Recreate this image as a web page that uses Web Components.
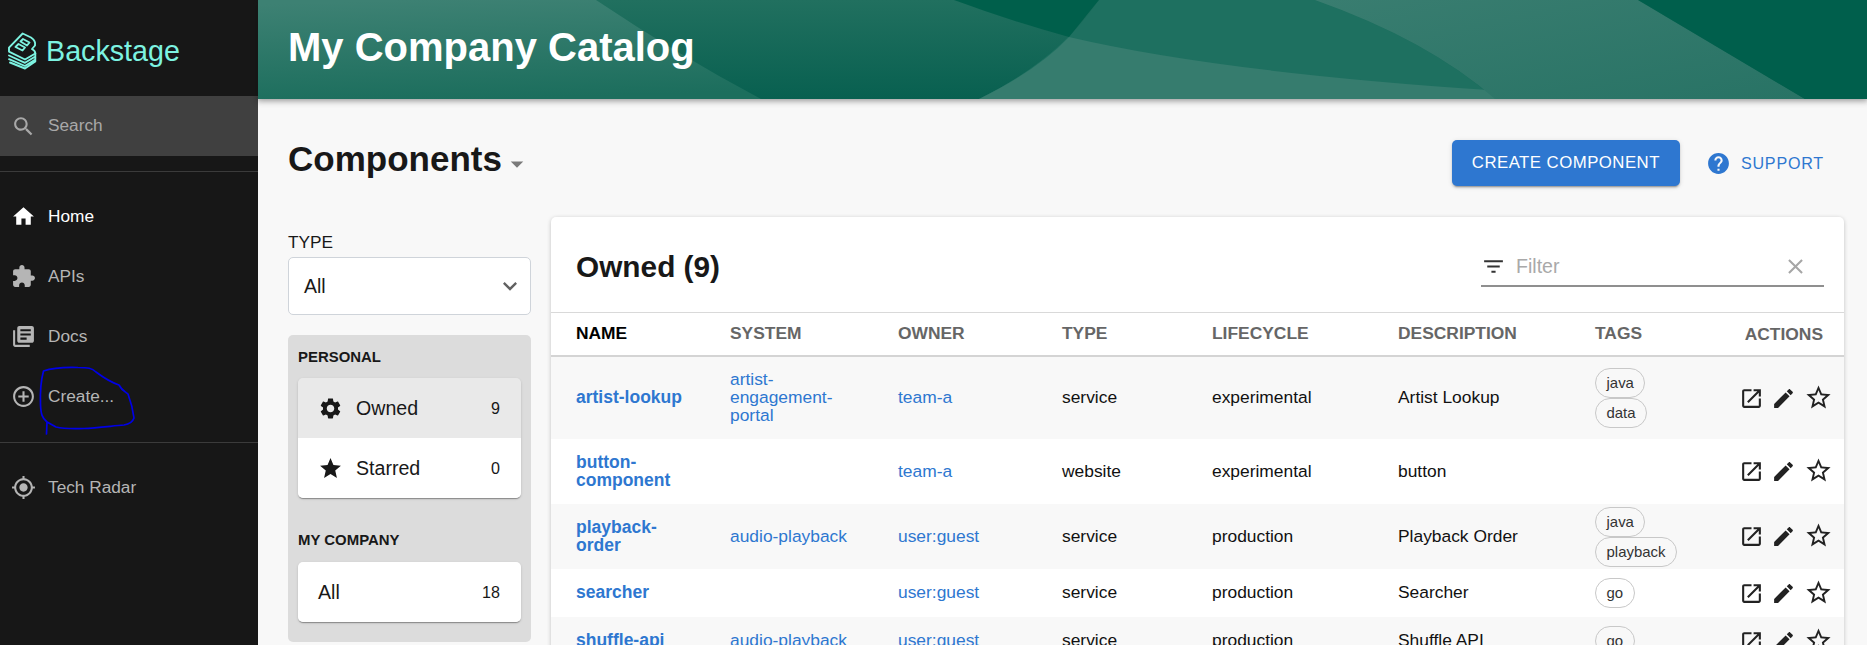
<!DOCTYPE html>
<html lang="en">
<head>
<meta charset="utf-8">
<title>My Company Catalog</title>
<style>
    html, body { margin: 0; height: 645px; overflow: hidden; background: #f8f8f8; }
    body { font-family: "Liberation Sans", Arial, sans-serif; color: #181818; }
</style>
</head>
<body>
<backstage-app>
    <side-bar slot="side">
        <nav-item icon="home" active>Home</nav-item>
        <nav-item icon="extension">APIs</nav-item>
        <nav-item icon="docs">Docs</nav-item>
        <nav-item icon="add">Create...</nav-item>
        <nav-item icon="radar" slot="tools">Tech Radar</nav-item>
    </side-bar>
    <page-banner slot="banner">My Company Catalog</page-banner>
    <content-head slot="head">Components</content-head>

    <filter-column slot="filters">
        <filter-group title="PERSONAL">
            <filter-row icon="settings" count="9" selected>Owned</filter-row>
            <filter-row icon="star" count="0">Starred</filter-row>
        </filter-group>
        <filter-group title="MY COMPANY">
            <filter-row count="18">All</filter-row>
        </filter-group>
    </filter-column>

    <catalog-card slot="table" heading="Owned (9)">
        <catalog-row head>
            <catalog-cell kind="head-first">NAME</catalog-cell>
            <catalog-cell kind="head">SYSTEM</catalog-cell>
            <catalog-cell kind="head">OWNER</catalog-cell>
            <catalog-cell kind="head">TYPE</catalog-cell>
            <catalog-cell kind="head">LIFECYCLE</catalog-cell>
            <catalog-cell kind="head">DESCRIPTION</catalog-cell>
            <catalog-cell kind="head">TAGS</catalog-cell>
            <catalog-cell kind="head-end">ACTIONS</catalog-cell>
        </catalog-row>
        <catalog-row>
            <catalog-cell kind="name">artist-lookup</catalog-cell>
            <catalog-cell kind="system">artist-engagement-portal</catalog-cell>
            <catalog-cell kind="link">team-a</catalog-cell>
            <catalog-cell>service</catalog-cell>
            <catalog-cell>experimental</catalog-cell>
            <catalog-cell>Artist Lookup</catalog-cell>
            <catalog-cell kind="tags"><tag-chip>java</tag-chip><tag-chip>data</tag-chip></catalog-cell>
            <row-actions></row-actions>
        </catalog-row>
        <catalog-row>
            <catalog-cell kind="name">button-component</catalog-cell>
            <catalog-cell kind="system"></catalog-cell>
            <catalog-cell kind="link">team-a</catalog-cell>
            <catalog-cell>website</catalog-cell>
            <catalog-cell>experimental</catalog-cell>
            <catalog-cell>button</catalog-cell>
            <catalog-cell kind="tags"></catalog-cell>
            <row-actions></row-actions>
        </catalog-row>
        <catalog-row>
            <catalog-cell kind="name">playback-order</catalog-cell>
            <catalog-cell kind="system">audio-playback</catalog-cell>
            <catalog-cell kind="link">user:guest</catalog-cell>
            <catalog-cell>service</catalog-cell>
            <catalog-cell>production</catalog-cell>
            <catalog-cell>Playback Order</catalog-cell>
            <catalog-cell kind="tags"><tag-chip>java</tag-chip><tag-chip>playback</tag-chip></catalog-cell>
            <row-actions></row-actions>
        </catalog-row>
        <catalog-row>
            <catalog-cell kind="name">searcher</catalog-cell>
            <catalog-cell kind="system"></catalog-cell>
            <catalog-cell kind="link">user:guest</catalog-cell>
            <catalog-cell>service</catalog-cell>
            <catalog-cell>production</catalog-cell>
            <catalog-cell>Searcher</catalog-cell>
            <catalog-cell kind="tags"><tag-chip>go</tag-chip></catalog-cell>
            <row-actions></row-actions>
        </catalog-row>
        <catalog-row>
            <catalog-cell kind="name">shuffle-api</catalog-cell>
            <catalog-cell kind="system">audio-playback</catalog-cell>
            <catalog-cell kind="link">user:guest</catalog-cell>
            <catalog-cell>service</catalog-cell>
            <catalog-cell>production</catalog-cell>
            <catalog-cell>Shuffle API</catalog-cell>
            <catalog-cell kind="tags"><tag-chip>go</tag-chip></catalog-cell>
            <row-actions></row-actions>
        </catalog-row>
    </catalog-card>
</backstage-app>

<script>
// Material icon paths
const ICONS = {
    search: 'M15.5 14h-.79l-.28-.27C15.41 12.59 16 11.11 16 9.5 16 5.91 13.09 3 9.5 3S3 5.91 3 9.5 5.91 16 9.5 16c1.61 0 3.09-.59 4.23-1.57l.27.28v.79l5 4.99L20.49 19l-4.99-5zm-6 0C7.01 14 5 11.99 5 9.5S7.01 5 9.5 5 14 7.01 14 9.5 11.99 14 9.5 14z',
    home: 'M10 20v-6h4v6h5v-8h3L12 3 2 12h3v8z',
    extension: 'M20.5 11H19V7c0-1.1-.9-2-2-2h-4V3.5C13 2.12 11.88 1 10.5 1S8 2.12 8 3.5V5H4c-1.1 0-1.99.9-1.99 2v3.8H3.5c1.49 0 2.7 1.21 2.7 2.7s-1.21 2.7-2.7 2.7H2V20c0 1.1.9 2 2 2h3.8v-1.5c0-1.49 1.21-2.7 2.7-2.7 1.49 0 2.7 1.21 2.7 2.7V22H17c1.1 0 2-.9 2-2v-4h1.5c1.38 0 2.5-1.12 2.5-2.5S21.88 11 20.5 11z',
    docs: 'M4 6H2v14c0 1.1.9 2 2 2h14v-2H4V6zm16-4H8c-1.1 0-2 .9-2 2v12c0 1.1.9 2 2 2h12c1.1 0 2-.9 2-2V4c0-1.1-.9-2-2-2zm-1 9H9V9h10v2zm-4 4H9v-2h6v2zm4-8H9V5h10v2z',
    add: 'M13 7h-2v4H7v2h4v4h2v-4h4v-2h-4V7zm-1-5C6.48 2 2 6.48 2 12s4.48 10 10 10 10-4.48 10-10S17.52 2 12 2zm0 18c-4.41 0-8-3.59-8-8s3.59-8 8-8 8 3.59 8 8-3.59 8-8 8z',
    radar: 'M12 8c-2.21 0-4 1.79-4 4s1.79 4 4 4 4-1.79 4-4-1.79-4-4-4zm8.94 3c-.46-4.17-3.77-7.48-7.94-7.94V1h-2v2.06C6.83 3.52 3.52 6.83 3.06 11H1v2h2.06c.46 4.17 3.77 7.48 7.94 7.94V23h2v-2.06c4.17-.46 7.48-3.77 7.94-7.94H23v-2h-2.06zM12 19c-3.87 0-7-3.13-7-7s3.13-7 7-7 7 3.13 7 7-3.13 7-7 7z',
    settings: 'M19.14 12.94c.04-.3.06-.61.06-.94 0-.32-.02-.64-.07-.94l2.03-1.58c.18-.14.23-.41.12-.61l-1.92-3.32c-.12-.22-.37-.29-.59-.22l-2.39.96c-.5-.38-1.03-.7-1.62-.94l-.36-2.54c-.04-.24-.24-.41-.48-.41h-3.84c-.24 0-.43.17-.47.41l-.36 2.54c-.59.24-1.13.57-1.62.94l-2.39-.96c-.22-.08-.47 0-.59.22L2.74 8.87c-.12.21-.08.47.12.61l2.03 1.58c-.05.3-.09.63-.09.94s.02.64.07.94l-2.03 1.58c-.18.14-.23.41-.12.61l1.92 3.32c.12.22.37.29.59.22l2.39-.96c.5.38 1.03.7 1.62.94l.36 2.54c.05.24.24.41.48.41h3.84c.24 0 .44-.17.47-.41l.36-2.54c.59-.24 1.13-.56 1.62-.94l2.39.96c.22.08.47 0 .59-.22l1.92-3.32c.12-.22.07-.47-.12-.61l-2.01-1.58zM12 15.6c-1.98 0-3.6-1.62-3.6-3.6s1.62-3.6 3.6-3.6 3.6 1.62 3.6 3.6-1.62 3.6-3.6 3.6z',
    star: 'M12 17.27L18.18 21l-1.64-7.03L22 9.24l-7.19-.61L12 2 9.19 8.63 2 9.24l5.46 4.73L5.82 21z',
    starBorder: 'M22 9.24l-7.19-.62L12 2 9.19 8.63 2 9.24l5.46 4.73L5.82 21 12 17.27 18.18 21l-1.63-7.03L22 9.24zM12 15.4l-3.76 2.27 1-4.28-3.32-2.88 4.38-.38L12 6.1l1.71 4.04 4.38.38-3.32 2.88 1 4.28L12 15.4z',
    openNew: 'M19 19H5V5h7V3H5c-1.11 0-2 .9-2 2v14c0 1.1.89 2 2 2h14c1.1 0 2-.9 2-2v-7h-2v7zM14 3v2h3.59l-9.83 9.83 1.41 1.41L19 6.41V10h2V3h-7z',
    edit: 'M3 17.25V21h3.75L17.81 9.94l-3.75-3.75L3 17.25zM20.71 7.04c.39-.39.39-1.02 0-1.41l-2.34-2.34c-.39-.39-1.02-.39-1.41 0l-1.83 1.83 3.75 3.75 1.83-1.83z',
    filter: 'M10 18h4v-2h-4v2zM3 6v2h18V6H3zm3 7h12v-2H6v2z',
    clear: 'M19 6.41L17.59 5 12 10.59 6.41 5 5 6.41 10.59 12 5 17.59 6.41 19 12 13.41 17.59 19 19 17.59 13.41 12z',
    help: 'M12 2C6.48 2 2 6.48 2 12s4.48 10 10 10 10-4.48 10-10S17.52 2 12 2zm1 17h-2v-2h2v2zm2.07-7.75l-.9.92C13.45 12.9 13 13.5 13 15h-2v-.5c0-1.1.45-2.1 1.17-2.83l1.24-1.26c.37-.36.59-.86.59-1.41 0-1.1-.9-2-2-2s-2 .9-2 2H8c0-2.21 1.79-4 4-4s4 1.79 4 4c0 .88-.36 1.68-.93 2.25z',
    expand: 'M16.59 8.59L12 13.17 7.41 8.59 6 10l6 6 6-6z',
    dropdown: 'M7 10l5 5 5-5z',
};

/**
 * 共通の土台: shadow root にテンプレートを流し込む
 */
class BaseElement extends HTMLElement {
    constructor() {
        super();
        this.attachShadow({ mode: 'open' });
    }
    connectedCallback() {
        this.shadowRoot.innerHTML = this.template();
    }
}

class MdIcon extends BaseElement {
    template() {
        const size = this.getAttribute('size') || 24;
        const path = ICONS[this.getAttribute('name')] || '';
        return `
            <style>
                :host { display: block; width: ${size}px; height: ${size}px; flex: none; }
                svg { display: block; width: 100%; height: 100%; fill: currentColor; }
            </style>
            <svg viewBox="0 0 24 24"><path d="${path}"/></svg>
        `;
    }
}
customElements.define('md-icon', MdIcon);

/**
 * アプリ全体の枠
 */
class BackstageApp extends BaseElement {
    template() {
        return `
            <style>
                :host { display: flex; height: 645px; overflow: hidden; }
                #main { flex: 1; min-width: 0; display: flex; flex-direction: column; }
                #body { flex: 1; min-height: 0; display: flex; flex-direction: column; padding: 0 23px 0 30px; }
                #columns { display: grid; grid-template-columns: 243px 1293px; column-gap: 20px; align-items: start; }
            </style>
            <slot name="side"></slot>
            <div id="main">
                <slot name="banner"></slot>
                <div id="body">
                    <slot name="head"></slot>
                    <div id="columns">
                        <slot name="filters"></slot>
                        <slot name="table"></slot>
                    </div>
                </div>
            </div>
        `;
    }
}
customElements.define('backstage-app', BackstageApp);

/**
 * サイドバー
 */
class SideBar extends BaseElement {
    template() {
        return `
            <style>
                :host { display: block; position: relative; width: 258px; height: 645px; flex: none; background: #171717; }
                #logo { height: 96px; display: flex; align-items: center; padding: 0 0 0 7px; box-sizing: border-box; color: #7df3e1; font-size: 28.7px; }
                #logo svg { width: 31px; height: 39px; margin-right: 8px; margin-top: 5px; flex: none; }
                #logo span { margin-top: 7px; }
                #search { height: 60px; background: #404040; display: flex; align-items: center; padding-left: 11px; color: #a8a8a8; font-size: 17.25px; }
                #search span { margin: -2px 0 0 12px; }
                hr { border: 0; height: 1px; background: #3b3b3b; margin: 0; }
                #first { margin-top: 15px; }
                #items { padding-top: 14px; display: flex; flex-direction: column; }
                #second { margin-top: 16px; }
                #tools { padding-top: 14px; display: flex; flex-direction: column; }
                /* 手書きの丸印 */
                #scribble { position: absolute; left: 0; top: 0; width: 258px; height: 645px; pointer-events: none; }
            </style>
            <div id="logo">
                <svg viewBox="7 6 31 39" fill="none" stroke="#7df3e1" stroke-width="1.9" stroke-linejoin="round" stroke-linecap="round">
                    <path d="M9 22.700 L22.700 8.500 L31 12.500 Q36 16 35 20.500 L32 24 Q35.500 26 35.300 28.500 L25 34.500 L9 26.600 Z"/>
                    <path d="M20.500 16.500 L23 14 L29.500 17.500 L27 20.500Z M15.500 22 L18.500 19 L25 22.500 L22.500 25.500Z"/>
                    <path d="M9 30.500 L25 37.800 L35.300 31.500 M9 34.200 L25 41 L35.300 34.500 M10 37.500 L25 43.500 L35.300 36.500 M35.300 28.500 V36.500"/>
                </svg>
                <span>Backstage</span>
            </div>
            <div id="search"><md-icon name="search" size="25"></md-icon><span>Search</span></div>
            <hr id="first">
            <div id="items"><slot></slot></div>
            <hr id="second">
            <div id="tools"><slot name="tools"></slot></div>
            <svg id="scribble" viewBox="0 0 258 645" fill="none" stroke="#0000e6" stroke-width="1.7" stroke-linecap="round" stroke-linejoin="round">
                <path d="M46.500 434 L47 422 C42 418 41 414 40.500 405 C40 392 41 380 43.500 371 C52 368 62 367 78 367.500 C88 367.500 92 368 96 372 C104 378 110 382 119 385 C122 391 126 392 128 394 C131 402 133 410 134 418 C133 421 130 424 124 425 C112 426 96 428 84 428.500 C72 429 60 428 56 427 L47 422"/>
            </svg>
        `;
    }
}
customElements.define('side-bar', SideBar);

class NavItem extends BaseElement {
    template() {
        const colour = this.hasAttribute('active') ? '#ffffff' : '#b5b5b5';
        return `
            <style>
                :host { display: flex; align-items: center; height: 60px; padding-left: 11px; color: ${colour}; font-size: 17.25px; }
                span { margin-left: 12px; }
            </style>
            <md-icon name="${this.getAttribute('icon')}" size="25"></md-icon>
            <span><slot></slot></span>
        `;
    }
}
customElements.define('nav-item', NavItem);

/**
 * ページ上部のバナー (波模様は下に敷く)
 */
class PageBanner extends BaseElement {
    template() {
        return `
            <style>
                :host { display: grid; height: 99px; flex: none; box-shadow: 0 1px 6px 1px rgba(20,20,20,.42); z-index: 1; background: #0d6453; }
                svg, h1 { grid-area: 1 / 1; }
                svg { width: 100%; height: 99px; display: block; }
                h1 { margin: 0; align-self: center; padding: 0 0 5px 30px; color: #fff; font-size: 40px; font-weight: 700; line-height: 48px; }
            </style>
            <svg viewBox="0 0 1609 99" preserveAspectRatio="none">
                <defs>
                    <linearGradient id="base" x1="0" y1="0" x2="0" y2="1"><stop offset="0" stop-color="#21705f"/><stop offset="1" stop-color="#086050"/></linearGradient>
                    <linearGradient id="left" x1="0.3" y1="0" x2="0.45" y2="1"><stop offset="0" stop-color="#3d8173"/><stop offset="1" stop-color="#1c6e5d"/></linearGradient>
                    <linearGradient id="band" x1="0" y1="0" x2="1" y2="1"><stop offset="0" stop-color="#397d70"/><stop offset="1" stop-color="#287365"/></linearGradient>
                </defs>
                <rect width="1609" height="99" fill="url(#base)"/>
                <path d="M841 0 H1057 Q1170 40 1237 99 H721 Q800 60 841 0Z" fill="#1e7060"/>
                <path d="M0 0 H338 Q420 55 503 99 H0Z" fill="url(#left)"/>
                <path d="M696 0 Q750 20 811 37 L841 0Z" fill="#005f4b"/>
                <path d="M811 37 Q780 70 721 99 H1300 L1231 90 Q960 72 811 37Z" fill="#367c6e"/>
                <path d="M1057 0 Q1170 40 1237 99 H1547 L1380 0Z" fill="url(#band)"/>
                <path d="M1380 0 H1609 V99 H1547Z" fill="#005f4c"/>
            </svg>
            <h1><slot></slot></h1>
        `;
    }
}
customElements.define('page-banner', PageBanner);

/**
 * 「Components」見出しとボタン
 */
class ContentHead extends BaseElement {
    template() {
        return `
            <style>
                :host { display: flex; align-items: center; height: 118px; box-sizing: border-box; flex: none; padding: 10px 20px 0 0; }
                h2 { margin: 0; font-size: 35px; font-weight: 700; line-height: 40px; color: #181818; padding-bottom: 9px; }
                #arrow { color: #7a7a7a; margin: 1px 0 0 0; }
                #spacer { flex: 1; }
                #create { height: 46px; width: 228px; display: flex; align-items: center; justify-content: center; background: #2e77d0; color: #fff; border-radius: 5px; font-size: 16.8px; letter-spacing: .47px; box-shadow: 0 3px 1px -2px rgba(0,0,0,.2), 0 2px 2px 0 rgba(0,0,0,.14), 0 1px 5px 0 rgba(0,0,0,.12); }
                #support { display: flex; align-items: center; margin-left: 26px; color: #2e77d0; font-size: 16.1px; letter-spacing: .8px; }
                #support span { margin-left: 10px; }
            </style>
            <h2><slot></slot></h2>
            <md-icon id="arrow" name="dropdown" size="30"></md-icon>
            <div id="spacer"></div>
            <div id="create">CREATE COMPONENT</div>
            <div id="support"><md-icon name="help" size="25"></md-icon><span>SUPPORT</span></div>
        `;
    }
}
customElements.define('content-head', ContentHead);

/**
 * 左側のフィルター列
 */
class FilterColumn extends BaseElement {
    template() {
        return `
            <style>
                :host { display: block; }
                #label { font-size: 17.25px; line-height: 20px; color: #181818; padding-top: 15px; margin-bottom: 5px; }
                #select { height: 58px; box-sizing: border-box; background: #fff; border: 1px solid #cfd4da; border-radius: 5px; display: flex; align-items: center; justify-content: space-between; padding: 0 6px 0 15px; font-size: 19.5px; color: #181818; }
                #select md-icon { color: #616161; }
                #panel { margin-top: 20px; background: #dcdcdc; border-radius: 5px; padding: 11px 10px 20px; }
            </style>
            <div id="label">TYPE</div>
            <div id="select"><span>All</span><md-icon name="expand" size="28"></md-icon></div>
            <div id="panel"><slot></slot></div>
        `;
    }
}
customElements.define('filter-column', FilterColumn);

class FilterGroup extends BaseElement {
    template() {
        return `
            <style>
                :host { display: block; }
                :host(:not(:first-child)) { margin-top: 31px; }
                h6 { margin: 0 0 10px; font-size: 14.95px; line-height: 22px; font-weight: 700; color: #181818; }
                :host(:not(:first-child)) h6 { margin-bottom: 11px; }
                #box { border-radius: 5px; overflow: hidden; box-shadow: 0 2px 1px -1px rgba(0,0,0,.2), 0 1px 1px 0 rgba(0,0,0,.14), 0 1px 3px 0 rgba(0,0,0,.12); }
            </style>
            <h6>${this.getAttribute('title')}</h6>
            <div id="box"><slot></slot></div>
        `;
    }
}
customElements.define('filter-group', FilterGroup);

class FilterRow extends BaseElement {
    template() {
        const icon = this.getAttribute('icon');
        const bg = this.hasAttribute('selected') ? '#e9e9e9' : '#fff';
        return `
            <style>
                :host { display: flex; align-items: center; height: 60px; background: ${bg}; padding: 0 21px 0 20px; color: #181818; font-size: 19.6px; }
                md-icon { margin: 0 13px 0 0; }
                #count { margin-left: auto; font-size: 16.1px; }
            </style>
            ${icon ? `<md-icon name="${icon}" size="25"></md-icon>` : ''}
            <span><slot></slot></span>
            <span id="count">${this.getAttribute('count')}</span>
        `;
    }
}
customElements.define('filter-row', FilterRow);

/**
 * 一覧カード
 */
class CatalogCard extends BaseElement {
    template() {
        return `
            <style>
                :host { display: block; background: #fff; border-radius: 5px 5px 0 0; box-shadow: 0 1px 4px rgba(0,0,0,.22); }
                #top { height: 95px; display: flex; align-items: center; padding: 0 20px 0 25px; border-bottom: 1px solid #d9d9d9; box-sizing: content-box; }
                h3 { margin: 0; font-size: 29.8px; font-weight: 700; color: #181818; flex: 1; padding-top: 4px; }
                #filter { width: 343px; height: 44px; box-sizing: border-box; border-bottom: 2px solid #8f8f8f; display: flex; align-items: center; color: #a9a9a9; font-size: 19.6px; padding-top: 6px; }
                #filter md-icon:first-child { color: #333; margin-right: 10px; }
                #filter span { flex: 1; }
                #filter md-icon:last-child { margin-right: 16px; color: #a6a6a6; }
            </style>
            <div id="top">
                <h3>${this.getAttribute('heading')}</h3>
                <div id="filter">
                    <md-icon name="filter" size="25"></md-icon>
                    <span>Filter</span>
                    <md-icon name="clear" size="25"></md-icon>
                </div>
            </div>
            <slot></slot>
        `;
    }
}
customElements.define('catalog-card', CatalogCard);

class CatalogRow extends BaseElement {
    template() {
        const head = this.hasAttribute('head');
        return `
            <style>
                :host { display: grid; grid-template-columns: 179px 168px 164px 150px 186px 197px 144px 1fr; align-items: center; min-height: ${head ? 42 : 47}px; background: #fff; ${head ? 'border-bottom: 2px solid #d4d4d4;' : ''} }
                :host(:nth-of-type(even)) { background: #f8f8f8; }
            </style>
            <slot></slot>
        `;
    }
}
customElements.define('catalog-row', CatalogRow);

class CatalogCell extends BaseElement {
    template() {
        const kind = this.getAttribute('kind') || 'text';
        const styles = {
            text: 'color: #111; font-size: 17.4px; padding: 13.5px 0 15.5px;',
            link: 'color: #2e77d0; font-size: 17.4px; padding: 13.5px 0 15.5px;',
            name: 'color: #2e77d0; font-size: 17.5px; font-weight: 700; padding: 13.5px 44px 15.5px 25px;',
            system: 'color: #2e77d0; font-size: 17.4px; padding: 13px 43px 15px 0;',
            tags: 'padding: 2.5px 0;',
            head: 'color: #666; font-size: 17.4px; font-weight: 700; padding-bottom: 2px;',
            'head-first': 'color: #000; font-size: 17.4px; font-weight: 700; padding: 0 0 2px 25px;',
            'head-end': 'color: #666; font-size: 17.4px; font-weight: 700; text-align: right; padding-right: 21px;',
        };
        return `
            <style>
                :host { display: block; line-height: 18px; min-width: 0; ${styles[kind]} }
            </style>
            <slot></slot>
        `;
    }
}
customElements.define('catalog-cell', CatalogCell);

class TagChip extends BaseElement {
    template() {
        return `
            <style>
                :host { display: block; width: max-content; height: 30px; box-sizing: border-box; border: 1px solid #c8c8c8; border-radius: 15px; padding: 0 10.5px; line-height: 28px; font-size: 14.95px; color: #333; }
            </style>
            <slot></slot>
        `;
    }
}
customElements.define('tag-chip', TagChip);

class RowActions extends BaseElement {
    template() {
        return `
            <style>
                :host { display: flex; align-items: center; color: #222; padding: 10px 0; height: 28px; }
                #edit { margin-left: 7px; }
                #star { margin-left: 8px; margin-top: -2px; }
            </style>
            <md-icon name="openNew" size="25"></md-icon>
            <md-icon id="edit" name="edit" size="25"></md-icon>
            <md-icon id="star" name="starBorder" size="29"></md-icon>
        `;
    }
}
customElements.define('row-actions', RowActions);
</script>
</body>
</html>
